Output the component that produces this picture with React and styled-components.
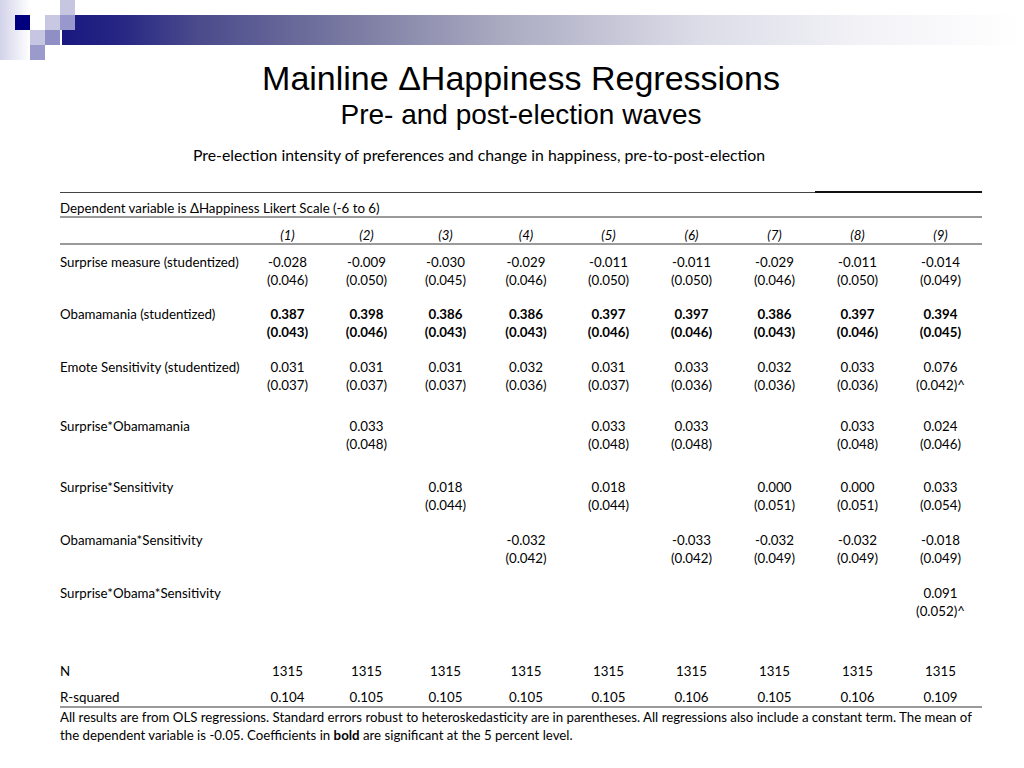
import React from 'react';
import styled, { createGlobalStyle } from 'styled-components';

const GlobalStyle = createGlobalStyle`
  html, body {
    margin: 0;
    padding: 0;
    background: #fff;
  }
`;

const Slide = styled.div`
  width: 1024px;
  height: 768px;
  overflow: hidden;
  background: #fff;
  color: #000;
  display: flex;
  flex-direction: column;
`;

const HeaderBand = styled.div`
  height: 60px;
  flex-shrink: 0;
  svg {
    display: block;
  }
`;

const TitleBlock = styled.div`
  display: flex;
  flex-direction: column;
  align-items: center;
  padding-left: 18px;
  font-family: 'Liberation Sans', Arial, sans-serif;
`;

const Title = styled.h1`
  margin: 0;
  font-size: 34px;
  line-height: 36px;
  font-weight: 400;
`;

const Subtitle = styled.h2`
  margin: 4px 0 0;
  font-size: 28px;
  line-height: 30px;
  font-weight: 400;
`;

const Caption = styled.div`
  margin-top: 16px;
  padding-right: 66px;
  text-align: center;
  font-family: Lato, 'Open Sans', sans-serif;
  font-size: 15.8px;
  line-height: 18px;
`;

const Table = styled.div`
  margin: 27px 0 0 60px;
  width: 922px;
  font-family: Lato, 'Open Sans', sans-serif;
  font-size: 13.3px;
  line-height: 18px;
`;

const COLS = '188px 79px 79px 79px 82px 83px 83px 83px 83px 83px';

const TopRule = styled.div`
  display: grid;
  grid-template-columns: 755px 167px;
  align-items: end;
  height: 2px;
`;

const Rule = styled.div`
  height: ${(p) => (p.$thick ? 2 : 1)}px;
  background: ${(p) => (p.$thick ? '#111' : '#444')};
`;

const DepRow = styled.div`
  height: 25px;
  padding-top: 6px;
  box-sizing: border-box;
  border-bottom: 2px solid #9a9a9a;
`;

const Row = styled.div`
  display: grid;
  grid-template-columns: ${COLS};
  height: ${(p) => p.$h}px;
  padding-top: ${(p) => p.$pt || 0}px;
  box-sizing: border-box;
  border-bottom: ${(p) => (p.$rule ? '2px solid #9a9a9a' : 'none')};
`;

const Label = styled.div`
  white-space: nowrap;
`;

const Cell = styled.div`
  text-align: center;
  white-space: nowrap;
  font-style: ${(p) => (p.$italic ? 'italic' : 'normal')};
  font-weight: ${(p) => (p.$bold ? 700 : 400)};
`;

const Body = styled.div`
  padding-top: 8px;
`;

const Note = styled.div`
  font-family: Lato, 'Open Sans', sans-serif;
  font-size: 13.25px;
  line-height: 18px;
  white-space: nowrap;
`;

const rows = [
  {
    label: 'Surprise measure (studentized)',
    h: 52,
    coef: ['-0.028', '-0.009', '-0.030', '-0.029', '-0.011', '-0.011', '-0.029', '-0.011', '-0.014'],
    se: ['(0.046)', '(0.050)', '(0.045)', '(0.046)', '(0.050)', '(0.050)', '(0.046)', '(0.050)', '(0.049)'],
  },
  {
    label: 'Obamamania (studentized)',
    h: 53,
    bold: true,
    coef: ['0.387', '0.398', '0.386', '0.386', '0.397', '0.397', '0.386', '0.397', '0.394'],
    se: ['(0.043)', '(0.046)', '(0.043)', '(0.043)', '(0.046)', '(0.046)', '(0.043)', '(0.046)', '(0.045)'],
  },
  {
    label: 'Emote Sensitivity (studentized)',
    h: 59,
    coef: ['0.031', '0.031', '0.031', '0.032', '0.031', '0.033', '0.032', '0.033', '0.076'],
    se: ['(0.037)', '(0.037)', '(0.037)', '(0.036)', '(0.037)', '(0.036)', '(0.036)', '(0.036)', '(0.042)^'],
  },
  {
    label: 'Surprise*Obamamania',
    h: 61,
    coef: ['', '0.033', '', '', '0.033', '0.033', '', '0.033', '0.024'],
    se: ['', '(0.048)', '', '', '(0.048)', '(0.048)', '', '(0.048)', '(0.046)'],
  },
  {
    label: 'Surprise*Sensitivity',
    h: 53,
    coef: ['', '', '0.018', '', '0.018', '', '0.000', '0.000', '0.033'],
    se: ['', '', '(0.044)', '', '(0.044)', '', '(0.051)', '(0.051)', '(0.054)'],
  },
  {
    label: 'Obamamania*Sensitivity',
    h: 53,
    coef: ['', '', '', '-0.032', '', '-0.033', '-0.032', '-0.032', '-0.018'],
    se: ['', '', '', '(0.042)', '', '(0.042)', '(0.049)', '(0.049)', '(0.049)'],
  },
  {
    label: 'Surprise*Obama*Sensitivity',
    h: 78,
    coef: ['', '', '', '', '', '', '', '', '0.091'],
    se: ['', '', '', '', '', '', '', '', '(0.052)^'],
  },
];

const nObs = Array(9).fill('1315');
const rSquared = ['0.104', '0.105', '0.105', '0.105', '0.105', '0.106', '0.105', '0.106', '0.109'];

const Ornament = () => (
  <svg width="1024" height="60" viewBox="0 0 1024 60">
    <defs>
      <linearGradient id="bar" x1="62" y1="0" x2="1024" y2="0" gradientUnits="userSpaceOnUse">
        <stop offset="0" stopColor="#181880" />
        <stop offset="0.06" stopColor="#262684" />
        <stop offset="0.14" stopColor="#4a4a8c" />
        <stop offset="0.3" stopColor="#7a7aa2" />
        <stop offset="0.45" stopColor="#a8a8c0" />
        <stop offset="0.66" stopColor="#dcdce8" />
        <stop offset="0.85" stopColor="#f4f4f8" />
        <stop offset="1" stopColor="#ffffff" />
      </linearGradient>
      <linearGradient id="fade" x1="0" y1="0" x2="1" y2="0">
        <stop offset="0" stopColor="#d2d2ea" />
        <stop offset="1" stopColor="#ffffff" />
      </linearGradient>
    </defs>
    <rect x="0" y="0" width="30" height="60" fill="url(#fade)" />
    <rect x="62" y="15" width="962" height="30" fill="url(#bar)" />
    <rect x="15" y="15" width="15" height="15" fill="#00007f" />
    <rect x="45" y="15" width="15" height="15" fill="#c8c8e2" />
    <rect x="60" y="0" width="15" height="15" fill="#c6c6e0" />
    <rect x="60" y="15" width="15" height="15" fill="#9898cc" />
    <rect x="30" y="30" width="15" height="15" fill="#c6c6e2" />
    <rect x="45" y="30" width="15" height="15" fill="#8f8fc6" />
    <rect x="30" y="45" width="15" height="15" fill="#9a9acc" />
  </svg>
);

const App = () => (
  <>
    <GlobalStyle />
    <Slide>
      <HeaderBand>
        <Ornament />
      </HeaderBand>
      <TitleBlock>
        <Title>Mainline ΔHappiness Regressions</Title>
        <Subtitle>Pre- and post-election waves</Subtitle>
      </TitleBlock>
      <Caption>Pre-election intensity of preferences and change in happiness, pre-to-post-election</Caption>
      <Table>
        <TopRule>
          <Rule />
          <Rule $thick />
        </TopRule>
        <DepRow>Dependent variable is ΔHappiness Likert Scale (-6 to 6)</DepRow>
        <Row $h={27} $pt={8} $rule>
          <Label />
          {Array.from({ length: 9 }, (_, i) => (
            <Cell key={i} $italic>({i + 1})</Cell>
          ))}
        </Row>
        <Body>
          {rows.map((row) => (
            <Row key={row.label} $h={row.h}>
              <Label>{row.label}</Label>
              {row.coef.map((c, i) => (
                <Cell key={i} $bold={row.bold}>
                  {c}
                  <br />
                  {row.se[i]}
                </Cell>
              ))}
            </Row>
          ))}
          <Row $h={26}>
            <Label>N</Label>
            {nObs.map((n, i) => (
              <Cell key={i}>{n}</Cell>
            ))}
          </Row>
          <Row $h={20} $rule>
            <Label>R-squared</Label>
            {rSquared.map((r, i) => (
              <Cell key={i}>{r}</Cell>
            ))}
          </Row>
        </Body>
        <Note>
          All results are from OLS regressions. Standard errors robust to heteroskedasticity are in parentheses. All
          regressions also include a constant term. The mean of
          <br />
          the dependent variable is -0.05. Coefficients in <b>bold</b> are significant at the 5 percent level.
        </Note>
      </Table>
    </Slide>
  </>
);

export default App;
